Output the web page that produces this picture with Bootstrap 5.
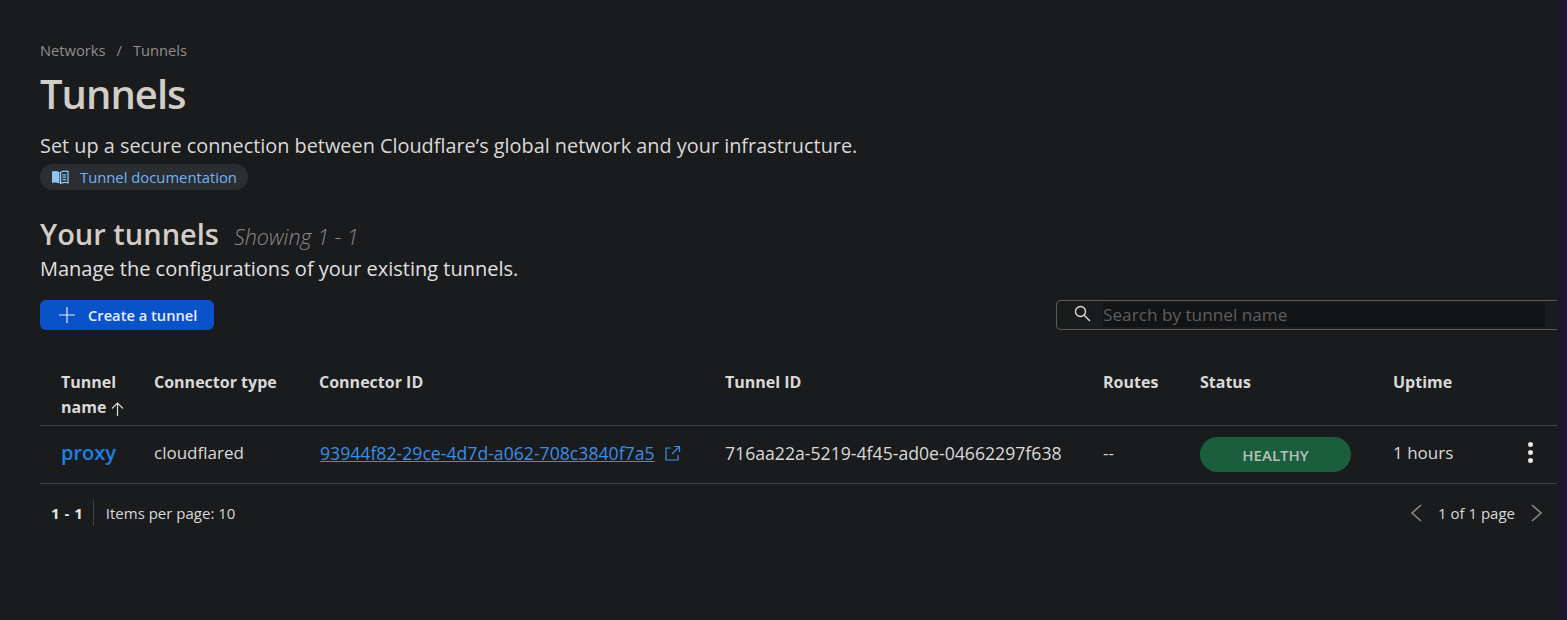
<!DOCTYPE html>
<html lang="en">
<head>
  <meta charset="UTF-8">
  <meta name="viewport" content="width=device-width, initial-scale=1">
  <title>Tunnels</title>
  <link href="https://cdn.jsdelivr.net/npm/bootstrap@5.3.2/dist/css/bootstrap.min.css" rel="stylesheet">
  <style>
    html, body {
      height: 100%;
      background-color: #1a1b1d;
      overflow: hidden;
    }
    body {
      font-family: "Open Sans", "Noto Sans", sans-serif;
      color: #d9d9d9;
    }
    .page-wrap {
      height: 620px;
      padding: 40px 10px 0 40px;
    }
    .crumbs {
      font-size: 14.7px;
      line-height: 20px;
      color: #8f8f8f;
      gap: 11px;
    }
    .page-title {
      font-size: 40px;
      letter-spacing: -1px;
      line-height: 48px;
      font-weight: 600;
      color: #d2cdc6;
      margin: 10px 0 14px;
    }
    .page-desc {
      font-size: 19.87px;
      line-height: 28px;
      color: #d9d9d9;
      margin: 0;
    }
    .doc-pill {
      height: 26px;
      margin-top: 4px;
      padding: 0 11px;
      background-color: #2a2e33;
      border-radius: 13px;
      color: #6fb3f2;
      font-size: 14.8px;
      gap: 11px;
      text-decoration: none;
    }
    .section-title {
      font-size: 29px;
      line-height: 38px;
      font-weight: 600;
      color: #d2cdc6;
      margin: 0;
    }
    .section-count {
      font-size: 21.5px;
      font-style: italic;
      font-weight: 300;
      color: #8a8a8a;
    }
    .section-head {
      margin-top: 25px;
      gap: 15px;
    }
    .section-desc {
      font-size: 20px;
      line-height: 26px;
      margin: 3px 0 0;
      color: #e0e0e0;
    }
    .create-btn {
      height: 30px;
      padding: 0 17px 0 18px;
      background-color: #0a52c9;
      border: 0;
      border-radius: 6px;
      color: #e8eefc;
      font-size: 14.7px;
      font-weight: 600;
      gap: 12px;
    }
    .create-btn:hover { background-color: #0a52c9; color: #e8eefc; }
    .action-row { margin-top: 18px; }
    .search-box {
      width: 501px;
      height: 30px;
      padding: 0 12px 0 17px;
      border: 1px solid #5c5c5c;
      border-right: 0;
      border-radius: 5px 0 0 5px;
      gap: 12px;
    }
    .search-box svg { margin-bottom: 4px; }
    .search-field {
      flex: 1;
      height: 24px;
      padding: 0;
      border: 0;
      outline: 0;
      background-color: #121315;
      font-size: 17.2px;
      color: #d9d9d9;
    }
    .search-field::placeholder { color: #5f5f5f; opacity: 1; }
    .tunnel-table {
      --bs-table-bg: transparent;
      --bs-table-color: #d9d9d9;
      --bs-table-border-color: #3f4143;
      table-layout: fixed;
      margin: 26px 0 0;
      width: 1517px;
      font-size: 17px;
    }
    .tunnel-table th {
      font-size: 16px;
      line-height: 25px;
      font-weight: 700;
      color: #d9d9d9;
      vertical-align: top;
      padding: 14px 0 5px;
    }
    .tunnel-table td {
      height: 58px;
      padding: 0 0 4px;
      vertical-align: middle;
      font-weight: 400;
    }
    .tunnel-table .first-col { padding-left: 21px; }
    .tunnel-table .pill-cell { padding-bottom: 0; }
    .id-text { font-size: 17.65px; }
    .proxy-link {
      color: #1f80e8;
      font-size: 20px;
      font-weight: 600;
      text-decoration: none;
    }
    .connector-link { color: #3a8ee6; margin-left: 1px; margin-right: 5px; }
    .connector-icon { margin-bottom: 3px; }
    .status-pill {
      width: 151px;
      height: 35px;
      background-color: #1b5e3e;
      border-radius: 18px;
      color: #b4c2b8;
      font-size: 15px;
      font-weight: 600;
    }
    .menu-dots { gap: 3px; padding-right: 9px; }
    .menu-dots span {
      width: 5px;
      height: 5px;
      border-radius: 50%;
      background-color: #e6e6e6;
    }
    .pager-row {
      width: 1517px;
      height: 58px;
      font-size: 15px;
      padding: 0 14px 0 11px;
    }
    .pager-count {
      font-weight: 700;
      color: #e6e6e6;
      word-spacing: 1px;
      padding-right: 10px;
      margin-right: 12px;
      border-right: 1px solid #3f4143;
      line-height: 26px;
    }
    .right-strip {
      position: fixed;
      top: 0;
      right: 0;
      width: 8px;
      height: 100%;
      background-color: #21132e;
    }
  </style>
</head>
<body>

<div class="page-wrap">
  <nav class="crumbs d-flex">
    <span>Networks</span><span>/</span><span>Tunnels</span>
  </nav>
  <h1 class="page-title">Tunnels</h1>
  <p class="page-desc">Set up a secure connection between Cloudflare’s global network and your infrastructure.</p>
  <a class="doc-pill d-inline-flex align-items-center" href="#">
    <svg width="18" height="14" viewBox="0 0 18 14"><path fill="#8fc4f7" d="M1 1.500C3.500.6 6 .8 8.400 2v11.500C6 12.400 3.500 12.200 1 13z"/><path fill="none" stroke="#8fc4f7" stroke-width="1.300" d="M9.600 2.300C12 1 14.500.8 17 1.500V12.800C14.500 12.200 12 12.400 9.600 13.400zM11.500 4.800h3.700M11.500 7.200h3.700M11.500 9.600h3.700"/></svg>
    Tunnel documentation
  </a>

  <div class="section-head d-flex align-items-baseline">
    <h2 class="section-title">Your tunnels</h2>
    <span class="section-count">Showing 1 - 1</span>
  </div>
  <p class="section-desc">Manage the configurations of your existing tunnels.</p>

  <div class="action-row d-flex justify-content-between align-items-center">
    <button class="create-btn btn d-flex align-items-center" type="button">
      <svg width="18" height="18" viewBox="0 0 18 18"><path stroke="#e8eefc" stroke-width="1.200" d="M9 1v16M1 9h16"/></svg>
      Create a tunnel
    </button>
    <div class="search-box d-flex align-items-center">
      <svg width="17" height="17" viewBox="0 0 17 17" fill="none" stroke="#e0e0e0" stroke-width="1.300"><circle cx="6.500" cy="6.500" r="5"/><path d="M10.200 10.200L16 16"/></svg>
      <input class="search-field" type="text" placeholder="Search by tunnel name">
    </div>
  </div>

  <table class="tunnel-table table">
    <colgroup>
      <col style="width:114px"><col style="width:165px"><col style="width:406px"><col style="width:378px"><col style="width:97px"><col style="width:193px"><col style="width:120px"><col>
    </colgroup>
    <thead>
      <tr>
        <th class="first-col">Tunnel name <svg width="13" height="14" viewBox="0 0 13 14" fill="none" stroke="#d9d9d9" stroke-width="1.200"><path d="M6.500 14V1M1 6.500l5.500-5.500 5.500 5.500"/></svg></th>
        <th>Connector type</th>
        <th>Connector ID</th>
        <th>Tunnel ID</th>
        <th>Routes</th>
        <th>Status</th>
        <th>Uptime</th>
        <th></th>
      </tr>
    </thead>
    <tbody>
      <tr>
        <td class="first-col"><a class="proxy-link" href="#">proxy</a></td>
        <td>cloudflared</td>
        <td class="id-text">
          <a class="connector-link" href="#">93944f82-29ce-4d7d-a062-708c3840f7a5</a>
          <svg class="connector-icon" width="17" height="17" viewBox="0 0 17 17" fill="none" stroke="#3a8ee6" stroke-width="1.200"><path d="M7 3H2v12h12v-5M10 1.500h5.500V7M15.500 1.500L8 9"/></svg>
        </td>
        <td class="id-text">716aa22a-5219-4f45-ad0e-04662297f638</td>
        <td>--</td>
        <td class="pill-cell"><span class="status-pill d-inline-flex align-items-center justify-content-center">HEALTHY</span></td>
        <td>1 hours</td>
        <td><div class="menu-dots d-flex flex-column align-items-center"><span></span><span></span><span></span></div></td>
      </tr>
    </tbody>
  </table>

  <div class="pager-row d-flex justify-content-between align-items-center">
    <div class="d-flex align-items-center">
      <span class="pager-count">1 - 1</span>
      <span>Items per page: 10</span>
    </div>
    <div class="d-flex align-items-center gap-3">
      <svg width="12" height="18" viewBox="0 0 12 18" fill="none" stroke="#8a8a8a" stroke-width="1.600"><path d="M11 1L2 9l9 8"/></svg>
      <span>1 of 1 page</span>
      <svg width="12" height="18" viewBox="0 0 12 18" fill="none" stroke="#8a8a8a" stroke-width="1.600"><path d="M1 1l9 8-9 8"/></svg>
    </div>
  </div>
</div>

<div class="right-strip"></div>

<script src="https://cdn.jsdelivr.net/npm/bootstrap@5.3.2/dist/js/bootstrap.bundle.min.js"></script>
</body>
</html>
